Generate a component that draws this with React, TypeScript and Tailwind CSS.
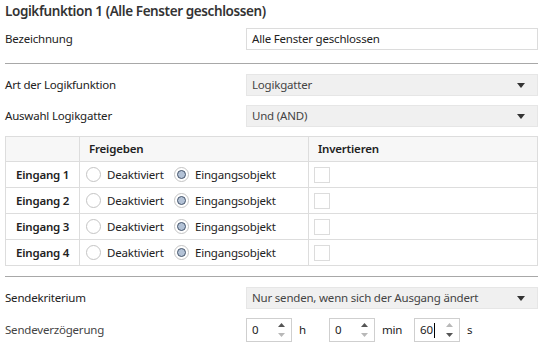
import React from "react";

const INPUTS = ["Eingang 1", "Eingang 2", "Eingang 3", "Eingang 4"];

function Caret() {
  return (
    <svg width="8" height="5" viewBox="0 0 8 5" className="shrink-0">
      <path d="M0 0H8L4 5Z" fill="#333" />
    </svg>
  );
}

function Select({ value }: { value: string }) {
  return (
    <div className="flex h-[22px] w-[292px] items-center justify-between border border-[#e6e6e6] bg-[#f0f0f0] pl-[5px] pr-[12px] text-[#444]">
      <span>{value}</span>
      <Caret />
    </div>
  );
}

function Row({ label, children, className = "" }: { label: string; children: React.ReactNode; className?: string }) {
  return (
    <div className={"flex items-center " + className}>
      <div className="w-[241px] shrink-0">{label}</div>
      {children}
    </div>
  );
}

function Radio({ checked }: { checked?: boolean }) {
  return (
    <span className="flex size-[15px] shrink-0 items-center justify-center rounded-full border border-[#c4c4c4] bg-white">
      {checked && <span className="size-[9px] rounded-full border border-[#44546a] bg-[#b3c2d6]" />}
    </span>
  );
}

function Spin({ value, upDim, downDim, caret }: { value: string; upDim?: boolean; downDim?: boolean; caret?: boolean }) {
  return (
    <div className="flex h-[24px] w-[46px] shrink-0 items-center justify-between border border-[#cfcfcf] bg-white pl-[5px] pr-[6px]">
      <span className="flex items-center">
        {value}
        {caret && <span className="ml-px h-[15px] w-px bg-black" />}
      </span>
      <span className="flex flex-col gap-[6px]">
        <svg width="7" height="4" viewBox="0 0 7 4">
          <path d="M0 4H7L3.5 0Z" fill={upDim ? "#b8b8b8" : "#555"} />
        </svg>
        <svg width="7" height="4" viewBox="0 0 7 4">
          <path d="M0 0H7L3.5 4Z" fill={downDim ? "#b8b8b8" : "#555"} />
        </svg>
      </span>
    </div>
  );
}

export default function App() {
  return (
    <div className="h-[359px] w-[551px] overflow-hidden bg-white pl-[5px] font-['Noto_Sans',sans-serif] text-[11.5px] tracking-[-0.2px] text-[#222]">
      <div className="h-[22px] text-[13.5px] font-semibold leading-[22px] tracking-[-0.4px] text-[#333]">
        Logikfunktion 1 (Alle Fenster geschlossen)
      </div>

      <Row label="Bezeichnung" className="mt-[6px]">
        <div className="flex h-[22px] w-[292px] items-center border border-[#dcdcdc] bg-white pl-[5px]">
          Alle Fenster geschlossen
        </div>
      </Row>

      <div className="mt-[13px] h-px w-[533px] bg-[#a8a8a8]" />

      <Row label="Art der Logikfunktion" className="mt-[10px]">
        <Select value="Logikgatter" />
      </Row>
      <Row label="Auswahl Logikgatter" className="mt-[9px]">
        <Select value="Und (AND)" />
      </Row>

      <div className="mt-[9px] grid w-[533px] grid-cols-[73px_228px_228px] grid-rows-[24px_25px_25px_25px_25px] gap-px border border-[#dddddd] bg-[#dddddd]">
        <div className="bg-[#f7f7f7]" />
        <div className="flex items-center bg-[#f7f7f7] pl-[9px] font-semibold">Freigeben</div>
        <div className="flex items-center bg-[#f7f7f7] pl-[9px] font-semibold">Invertieren</div>
        {INPUTS.map((name) => (
          <React.Fragment key={name}>
            <div className="flex items-center bg-white pl-[10px] font-semibold">{name}</div>
            <div className="flex items-center bg-white pl-[6px]">
              <div className="flex w-[88px] items-center gap-[6px]">
                <Radio />
                <span>Deaktiviert</span>
              </div>
              <div className="flex items-center gap-[6px]">
                <Radio checked />
                <span>Eingangsobjekt</span>
              </div>
            </div>
            <div className="flex items-center bg-white pl-[5px]">
              <span className="size-[16px] border border-[#dcdcdc] bg-white" />
            </div>
          </React.Fragment>
        ))}
      </div>

      <div className="mt-[10px] h-px w-[533px] bg-[#a8a8a8]" />

      <Row label="Sendekriterium" className="mt-[10px]">
        <Select value="Nur senden, wenn sich der Ausgang ändert" />
      </Row>

      <Row label="Sendeverzögerung" className="mt-[9px] text-[#444]">
        <div className="flex items-center text-[#222]">
          <div className="flex w-[83px] items-center">
            <Spin value="0" downDim />
            <span className="ml-[7px]">h</span>
          </div>
          <div className="flex w-[85px] items-center">
            <Spin value="0" downDim />
            <span className="ml-[7px]">min</span>
          </div>
          <div className="flex items-center">
            <Spin value="60" upDim caret />
            <span className="ml-[7px]">s</span>
          </div>
        </div>
      </Row>
    </div>
  );
}
